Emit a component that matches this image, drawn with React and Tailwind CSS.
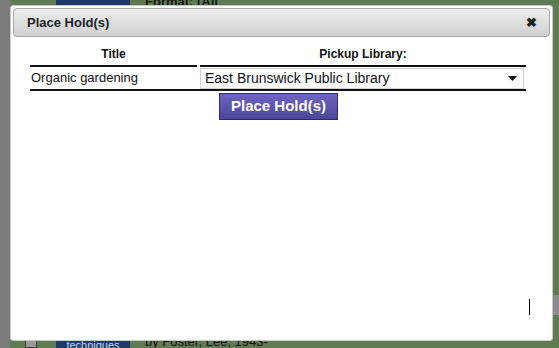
import React from "react";

const App = () => {
  return (
    <div
      className="relative w-[559px] h-[348px] overflow-hidden bg-[#5f7b52]"
      style={{ fontFamily: '"Liberation Sans", Arial, sans-serif' }}
    >
      {/* page behind the dialog */}
      <div className="flex h-full">
        <div className="w-[10px] h-full bg-[#7b7b7b]" />
        <div className="flex-1 flex flex-col justify-between">
          <div className="flex items-start h-[8px]">
            <div className="w-[46px]" />
            <div className="w-[74px] h-[8px] bg-[#1e3c66]" />
            <div className="ml-[15px] text-[13px] font-bold text-[#1a1a1a] leading-[10px] -mt-[3px]">
              Format: [All
            </div>
          </div>
          <div className="flex items-end h-[10px] text-[13px] leading-[14px]">
            <div className="ml-[15px] w-[12px] h-[8px] border border-[#3d3d3d] bg-[#9a9a9a]" />
            <div className="ml-[19px] w-[74px] h-[10px] bg-[#1e3c66] text-[#c8d4e8] text-[11px] leading-[14px] text-center">
              techniques
            </div>
            <div className="ml-[15px] text-[#111] text-[13px] leading-[12px]">
              by Foster, Lee, 1943-
            </div>
          </div>
        </div>
      </div>

      {/* dialog */}
      <div className="absolute left-[10px] top-[5px] w-[543px] h-[336px] bg-white border border-[#c9c9c9] rounded-[3px] p-[2px] flex flex-col">
        <div className="h-[29px] rounded-[4px] border border-[#a8a8a8] bg-gradient-to-b from-[#ededed] to-[#d0d0d0] flex items-center justify-between pl-[13px] pr-[12px]">
          <span className="text-[13px] font-bold text-[#222]">Place Hold(s)</span>
          <span className="text-[13px] font-bold text-[#222] leading-none">✖</span>
        </div>

        <div className="ml-[17px] mt-[8px] w-[496px]">
          <div className="flex text-[12px] font-bold text-[#111]">
            <div className="w-[167px] text-center pb-[2px] border-b-2 border-[#111]">Title</div>
            <div className="ml-[3px] flex-1 text-center pb-[2px] border-b-2 border-[#111]">Pickup Library:</div>
          </div>
          <div className="flex items-center h-[24px] border-b-2 border-[#111] text-[13px] text-[#111]">
            <div className="w-[170px] pl-[1px]">Organic gardening</div>
            <div className="w-[324px] h-[21px] border border-[#cfcfcf] flex items-center justify-between pl-[4px] pr-[6px] text-[14px]">
              <span>East Brunswick Public Library</span>
              <svg width="9" height="5" viewBox="0 0 9 5">
                <path d="M0 0h9L4.5 5z" fill="#111" />
              </svg>
            </div>
          </div>
          <div className="flex justify-center pt-[2px] pl-[1px]">
            <button className="w-[119px] h-[27px] bg-gradient-to-b from-[#6e66c1] to-[#4b4599] border border-[#2f2a6e] text-white text-[15px] font-bold">
              Place Hold(s)
            </button>
          </div>
        </div>

        <div className="flex-1 flex items-end justify-end pr-[20px] pb-[23px]">
          <div className="w-[1px] h-[16px] bg-black" />
        </div>
      </div>

      {/* grey tab on right edge */}
      <div className="absolute right-0 top-[295px] w-[6px] h-[20px] bg-[#8c8c8c]" />
    </div>
  );
};

export default App;
